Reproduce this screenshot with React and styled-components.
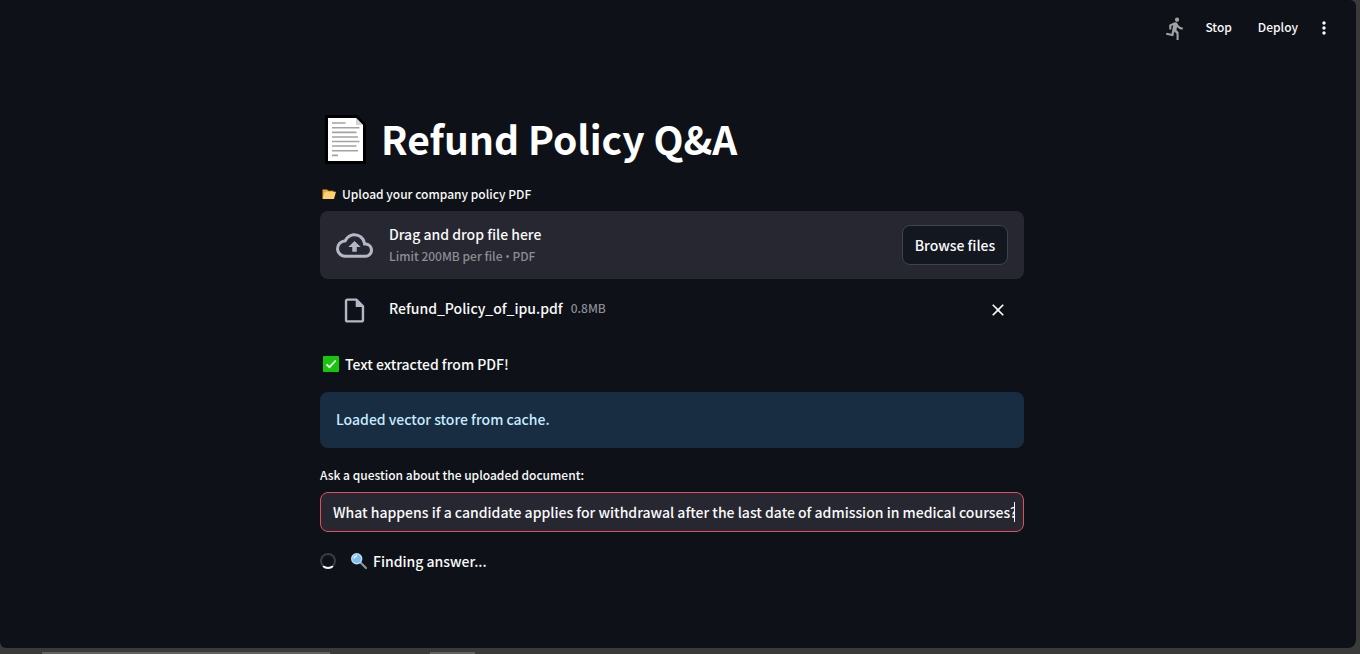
import React, { useState } from "react";
import styled, { createGlobalStyle, keyframes } from "styled-components";
import {
  MdClose,
  MdDirectionsRun,
  MdMoreVert,
  MdOutlineCloudUpload,
  MdOutlineInsertDriveFile,
} from "react-icons/md";

const GlobalStyle = createGlobalStyle`
  *, *::before, *::after { box-sizing: border-box; }
  body {
    margin: 0;
    background: #3b3a3a;
    color: #fafafa;
    font-family: "Noto Sans CJK SC", "Noto Sans", sans-serif;
    font-size: 14px;
    font-weight: 500;
    line-height: 24px;
  }
  button, input { font: inherit; color: inherit; }
`;

const Desktop = styled.div`
  display: flex;
  flex-direction: column;
  min-height: 100vh;
`;

const Window = styled.div`
  flex: 1;
  margin-right: 4px;
  padding-right: 12px;
  background: #0e1117;
  border-radius: 0 6px 8px 6px;
`;

const Taskbar = styled.div`
  display: flex;
  align-items: flex-end;
  gap: 100px;
  height: 6px;
  padding-left: 42px;
`;

const TaskEdge = styled.span`
  width: ${(p) => p.$width}px;
  height: ${(p) => p.$height}px;
  background: #64625f;
`;

const Toolbar = styled.header`
  display: flex;
  justify-content: flex-end;
  align-items: center;
  height: 56px;
  padding-right: 10px;
  svg { flex: none; }
`;

const ToolButton = styled.button`
  display: flex;
  align-items: center;
  padding: ${(p) => (p.$icon ? "0" : "0 13px 2px")};
  border: 0;
  background: none;
  font-size: 12px;
  cursor: pointer;
`;

const Running = styled.span`
  display: flex;
  margin-right: 4px;
  color: #a0a2a5;
`;

const MenuSlot = styled.div`
  display: flex;
  margin-left: 3px;
`;

const Main = styled.main`
  display: flex;
  flex-direction: column;
  max-width: 736px;
  margin: 0 auto;
  padding: 56px 16px 72px;
`;

const Title = styled.h1`
  display: flex;
  align-items: center;
  gap: 11px;
  height: 56px;
  margin: 0 0 16px;
  font-size: 39px;
  line-height: 52px;
  font-weight: 700;
  color: #ffffff;
  svg { flex: none; }
`;

const TitleText = styled.span`
  padding-bottom: 4px;
`;

const Label = styled.label`
  display: flex;
  align-items: center;
  gap: 5px;
  height: 20px;
  margin-bottom: 7px;
  font-size: 12px;
  line-height: 20px;
`;

const DropZone = styled.section`
  display: flex;
  align-items: center;
  gap: 16px;
  height: 68px;
  padding: 0 16px;
  border-radius: 8px;
  background: #262730;
`;

const IconCell = styled.span`
  display: flex;
  justify-content: center;
  flex: none;
  width: 37px;
  color: #b4b7c6;
`;

const DropText = styled.div`
  display: flex;
  flex-direction: column;
  flex: 1;
  padding-bottom: 2px;
`;

const Muted = styled.span`
  font-size: 12px;
  line-height: 20px;
  color: #8b8d94;
`;

const Bullet = styled.span`
  font-family: "Open Sans", sans-serif;
`;

const BrowseButton = styled.button`
  width: 106px;
  height: 40px;
  padding: 0;
  border: 1px solid #41434b;
  border-radius: 8px;
  background: #131720;
  cursor: pointer;
`;

const FileRow = styled.div`
  display: flex;
  align-items: center;
  gap: 16px;
  height: 62px;
  padding: 0 16px;
`;

const FileName = styled.div`
  display: flex;
  align-items: center;
  gap: 8px;
  flex: 1;
  padding-bottom: 4px;
`;

const RemoveButton = styled.button`
  display: flex;
  padding: 0;
  border: 0;
  background: none;
  cursor: pointer;
`;

const Status = styled.p`
  display: flex;
  align-items: center;
  gap: 6px;
  height: 24px;
  margin: 11px 0 16px;
  padding-left: 3px;
`;

const Alert = styled.div`
  height: 56px;
  margin-bottom: 17px;
  padding: 15px 16px;
  border-radius: 8px;
  background: #182c42;
  color: #c7ebff;
`;

const Field = styled.div`
  display: flex;
  align-items: center;
  height: 40px;
  padding: 0 8px 0 12px;
  border: 1px solid #e0505a;
  border-radius: 8px;
  background: #262730;
`;

const TextInput = styled.input`
  flex: 1;
  min-width: 0;
  height: 38px;
  padding: 0;
  border: 0;
  outline: 0;
  background: none;
`;

const Caret = styled.span`
  width: 1px;
  height: 20px;
  background: #fafafa;
`;

const SpinnerRow = styled.div`
  display: flex;
  align-items: center;
  gap: 14px;
  height: 24px;
  margin-top: 17px;
`;

const spin = keyframes`
  to { transform: rotate(360deg); }
`;

const Spinner = styled.span`
  width: 16px;
  height: 16px;
  border: 2px solid #3a3c43;
  border-bottom-color: #fafafa;
  border-radius: 50%;
  animation: ${spin} 1s steps(1) infinite;
`;

const Busy = styled.span`
  display: flex;
  align-items: center;
  gap: 5px;
`;

const PageIcon = () => (
  <svg width="50" height="52" viewBox="0 0 50 52" aria-hidden="true">
    <path d="M5 1H37L46 10V50H5Z" fill="#000" />
    <path d="M8 4H36L43 11V47H8Z" fill="#fff" />
    <path d="M36 4V11H43Z" fill="#d4d4d4" />
    <g stroke="#a3a3a3" strokeWidth="1.6">
      <path d="M12 9H25.500M12 13.700H39.500M12 18.400H36.500M12 23H38M12 27.500H39.500M12 32H36.500M12 36.700H38M12 41.400H18" />
    </g>
  </svg>
);

const FolderIcon = () => (
  <svg width="17" height="16" viewBox="0 0 17 16" aria-hidden="true">
    <path d="M2.500 3.500H7L8.500 4.700H13.500V12H2.500Z" fill="#e8a33b" />
    <path d="M4.800 5.700H16L14 13H2.500Z" fill="#ffcf70" />
  </svg>
);

const CheckIcon = () => (
  <svg width="16" height="16" viewBox="0 0 16 16" aria-hidden="true">
    <rect width="16" height="16" rx="1" fill="#16c60c" />
    <path d="M3.500 8.300L6.500 11.200L12.700 4.500" fill="none" stroke="#fff" strokeWidth="1.7" />
  </svg>
);

const LensIcon = () => (
  <svg width="18" height="18" viewBox="0 0 18 18" aria-hidden="true">
    <path d="M10 10L16 16" stroke="#8b9299" strokeWidth="2.200" strokeLinecap="round" />
    <circle cx="6.700" cy="6.700" r="5" fill="#7cc0f2" stroke="#b8dcf4" strokeWidth="1.400" />
    <path d="M4 6.500Q4.500 4 7 4" stroke="#e6f5ff" strokeWidth="1.400" fill="none" />
  </svg>
);

export default function App() {
  const [question, setQuestion] = useState(
    "What happens if a candidate applies for withdrawal after the last date of admission in medical courses?"
  );
  return (
    <Desktop>
      <GlobalStyle />
      <Window>
        <Toolbar>
          <Running><MdDirectionsRun size={25} /></Running>
          <ToolButton type="button">Stop</ToolButton>
          <ToolButton type="button">Deploy</ToolButton>
          <MenuSlot>
            <ToolButton type="button" $icon aria-label="Main menu"><MdMoreVert size={20} /></ToolButton>
          </MenuSlot>
        </Toolbar>
        <Main>
          <Title><PageIcon /><TitleText>Refund Policy Q&amp;A</TitleText></Title>
          <Label htmlFor="browse"><FolderIcon />Upload your company policy PDF</Label>
          <DropZone>
            <IconCell><MdOutlineCloudUpload size={37} /></IconCell>
            <DropText>
              <span>Drag and drop file here</span>
              <Muted>Limit 200MB per file <Bullet>•</Bullet> PDF</Muted>
            </DropText>
            <BrowseButton type="button" id="browse">Browse files</BrowseButton>
          </DropZone>
          <FileRow>
            <IconCell><MdOutlineInsertDriveFile size={29} /></IconCell>
            <FileName>
              <span>Refund_Policy_of_ipu.pdf</span>
              <Muted>0.8MB</Muted>
            </FileName>
            <RemoveButton type="button" aria-label="Remove file"><MdClose size={20} /></RemoveButton>
          </FileRow>
          <Status><CheckIcon />Text extracted from PDF!</Status>
          <Alert role="status">Loaded vector store from cache.</Alert>
          <Label htmlFor="question">Ask a question about the uploaded document:</Label>
          <Field>
            <TextInput id="question" type="text" value={question} onChange={(e) => setQuestion(e.target.value)} />
            <Caret />
          </Field>
          <SpinnerRow>
            <Spinner />
            <Busy><LensIcon />Finding answer...</Busy>
          </SpinnerRow>
        </Main>
      </Window>
      <Taskbar>
        <TaskEdge $width={288} $height={2} />
        <TaskEdge $width={45} $height={2} />
      </Taskbar>
    </Desktop>
  );
}
